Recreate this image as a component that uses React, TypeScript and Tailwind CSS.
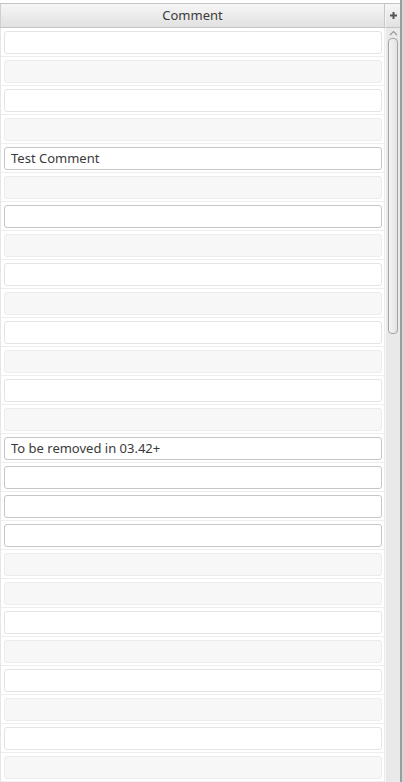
import React from "react";

type Kind = "w" | "g" | "d";
const rows: { k: Kind; t?: string }[] = [
  { k: "w" }, { k: "g" }, { k: "w" }, { k: "g" },
  { k: "d", t: "Test Comment" }, { k: "g" }, { k: "d" }, { k: "g" },
  { k: "w" }, { k: "g" }, { k: "w" }, { k: "g" }, { k: "w" }, { k: "g" },
  { k: "d", t: "To be removed in 03.42+" }, { k: "d" }, { k: "d" }, { k: "d" },
  { k: "g" }, { k: "g" }, { k: "w" }, { k: "g" }, { k: "w" }, { k: "g" },
  { k: "w" }, { k: "g" },
];

function Row({ k, t }: { k: Kind; t?: string }) {
  const box =
    k === "g"
      ? "bg-[#f7f7f7] border-[#ececec]"
      : k === "d"
      ? "bg-white border-[#c6c6c6]"
      : "bg-white border-[#e4e4e4]";
  return (
    <div className="shrink-0 h-[29px] pt-[3px] pl-[3px] border-b border-[#eeeeee]">
      <div className={`h-[23px] w-[378px] rounded-[3px] border ${box} flex items-center pl-[6px] text-[13px] text-[#3a3a3a]`}>
        {t}
      </div>
    </div>
  );
}

export default function App() {
  return (
    <div
      className="w-[404px] h-[782px] overflow-hidden bg-white flex"
      style={{ fontFamily: '"Noto Sans", "Liberation Sans", sans-serif' }}
    >
      <div className="w-[400px] flex flex-col pt-[3px]">
        <div className="flex h-[25px] shrink-0 border-y border-[#c4c4c4] bg-gradient-to-b from-[#f6f6f6] to-[#e1e1e1]">
          <div className="w-[385px] border-l border-[#d0d0d0] border-r border-r-[#c8c8c8] flex items-center justify-center text-[13px] text-[#3a3a3a]">
            Comment
          </div>
          <div className="flex-1 border-l border-[#f4f4f4] flex items-center justify-center">
            <svg width="7" height="7" viewBox="0 0 7 7">
              <rect x="2.5" y="0" width="2" height="7" fill="#555" />
              <rect x="0" y="2.5" width="7" height="2" fill="#555" />
            </svg>
          </div>
        </div>
        <div className="flex flex-1 min-h-0">
          <div className="w-[385px] flex flex-col overflow-hidden border-l border-[#e6e6e6] border-r border-r-[#ececec]">
            {rows.map((r, i) => (
              <Row key={i} k={r.k} t={r.t} />
            ))}
          </div>
          <div className="flex-1 bg-[#e9e9e9] border-l border-[#f8f8f8] flex flex-col items-center">
            <svg width="9" height="6" viewBox="0 0 9 6" className="mt-[2px]">
              <path d="M1 5 L4.5 1.5 L8 5" stroke="#9a9a9a" strokeWidth="1.2" fill="none" />
            </svg>
            <div className="mt-[2px] w-[10px] h-[296px] rounded-[4px] border border-[#a4a4a4] bg-gradient-to-r from-[#f4f4f4] to-[#e2e2e2]" />
          </div>
        </div>
      </div>
      <div className="w-[4px] flex">
        <div className="w-[2px] bg-[#9c9c9c]" />
        <div className="flex-1 bg-[#d6d6d6]" />
      </div>
    </div>
  );
}
